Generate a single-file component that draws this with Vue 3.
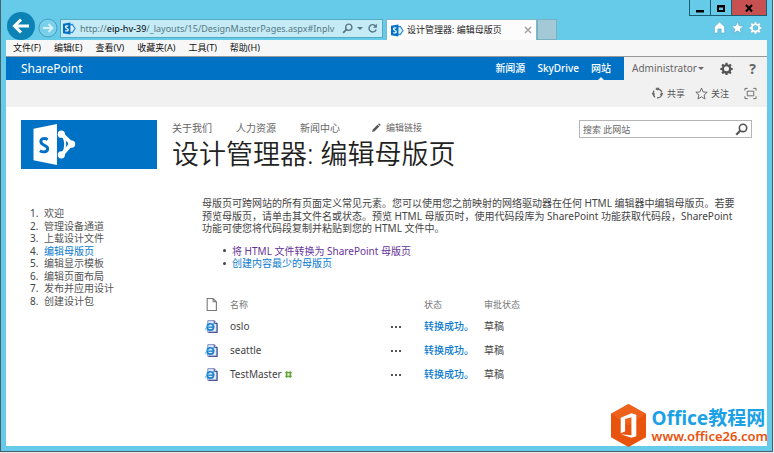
<script setup>
const menus = ['文件(F)', '编辑(E)', '查看(V)', '收藏夹(A)', '工具(T)', '帮助(H)']
const suiteLinks = ['新闻源', 'SkyDrive', '网站']
const siteLinks = ['关于我们', '人力资源', '新闻中心']
const steps = ['欢迎', '管理设备通道', '上载设计文件', '编辑母版页', '编辑显示模板', '编辑页面布局', '发布并应用设计', '创建设计包']
const current = 3
const pages = [
  { name: 'oslo', fresh: false },
  { name: 'seattle', fresh: false },
  { name: 'TestMaster', fresh: true },
]
</script>

<template>
  <div class="window">
    <svg class="defs" width="0" height="0" aria-hidden="true">
      <symbol id="gear" viewBox="0 0 16 16">
        <path fill-rule="evenodd" d="M6.8 1h2.4l.4 2 1.2.5 1.8-1.2 1.7 1.7-1.2 1.8.5 1.2 2 .4v2.4l-2 .4-.5 1.2 1.2 1.8-1.7 1.7-1.8-1.2-1.2.5-.4 2H6.8l-.4-2-1.2-.5-1.8 1.2-1.7-1.7 1.2-1.8-.5-1.2-2-.4V7.4l2-.4.5-1.200L1.700 4l1.700-1.700 1.800 1.200L6.400 3zM8 5.200a3.100 3.100 0 1 0 0 6.200 3.100 3.100 0 0 0 0-6.200z" />
      </symbol>
      <symbol id="lens" viewBox="0 0 12 12">
        <circle cx="7.400" cy="4.600" r="3.400" fill="none" stroke="currentColor" stroke-width="1.500" />
        <path d="M5 7 1.200 10.800" stroke="currentColor" stroke-width="2" />
      </symbol>
      <symbol id="sp" viewBox="0 0 14 14">
        <path d="M7.500 3 10 2.600 13 7l-3 4.400-2.500-.4" fill="#d6effa" stroke="#2a87cf" stroke-width="1.200" />
        <path d="M0 2 8 .5v13L0 12z" fill="#0072c6" />
        <path d="M5.700 4.500C4.500 3.900 2.700 4 2.700 5.500c0 1.600 3 1.300 3 2.900 0 1.400-1.900 1.600-3.200.9" fill="none" stroke="#fff" stroke-width="1.300" />
      </symbol>
    </svg>

    <header class="titlebar">
      <button class="back" aria-label="后退">
        <svg viewBox="0 0 28 28"><path d="M22 14H8M14 7.500 7.500 14l6.500 6.500" fill="none" stroke="#fff" stroke-width="3" /></svg>
      </button>
      <button class="forward" aria-label="前进">
        <svg viewBox="0 0 20 20"><circle cx="10" cy="10" r="9" fill="#79d0ea" stroke="#4a9fbe" /><path d="M5 10h9M10.500 6l4 4-4 4" fill="none" stroke="#d5f2fa" stroke-width="1.800" /></svg>
      </button>
      <div class="address">
        <svg class="i13"><use href="#sp" /></svg>
        <span class="url">http://<b>eip-hv-39</b>/_layouts/15/DesignMasterPages.aspx#Inplv</span>
        <button aria-label="搜索"><svg class="i11"><use href="#lens" /></svg></button>
        <i class="caret"></i>
        <button aria-label="刷新"><svg class="i11" viewBox="0 0 12 12"><path d="M9.500 3.500A4 4 0 1 0 10 7" fill="none" stroke="currentColor" stroke-width="1.500" /><path d="M10.800.8v4.400H6.400z" fill="currentColor" /></svg></button>
      </div>
      <div class="tab">
        <svg class="i13"><use href="#sp" /></svg>
        <span>设计管理器: 编辑母版页</span>
        <button aria-label="关闭选项卡"><svg viewBox="0 0 8 8"><path d="m1 1 6 6M7 1 1 7" stroke="#a3a3a3" stroke-width="1.500" /></svg></button>
      </div>
      <button class="newtab" aria-label="新建选项卡"></button>
      <div class="corner">
        <div class="controls">
          <button aria-label="最小化"><svg viewBox="0 0 12 12"><path d="M2 8h8v2.500H2z" /></svg></button>
          <button aria-label="最大化"><svg viewBox="0 0 12 12"><path fill-rule="evenodd" d="M2 3h8v7H2zm2 2.500v2.500h4V5.500z" /></svg></button>
          <button class="close" aria-label="关闭"><svg viewBox="0 0 12 12"><path d="m3 3 6 6.500M9 3 3 9.500" stroke="#000" stroke-width="2" /></svg></button>
        </div>
        <div class="tools">
          <button aria-label="主页"><svg viewBox="0 0 14 14"><path d="M7 1 1.500 6.200V13h3.700V8.500h3.600V13h3.700V6.200z" fill="#fff" stroke="#55a5bd" stroke-width=".6" /></svg></button>
          <button aria-label="收藏夹"><svg viewBox="0 0 14 14"><path d="m7 .8 1.800 4.300 4.700.4-3.600 3 1.100 4.600L7 10.600l-4 2.500 1.100-4.600-3.600-3 4.700-.4z" fill="#fff" stroke="#55a5bd" stroke-width=".6" /></svg></button>
          <button aria-label="工具"><svg fill="#fff" stroke="#55a5bd" stroke-width=".5"><use href="#gear" /></svg></button>
        </div>
      </div>
    </header>

    <div class="page">
      <nav class="menubar">
        <button v-for="m in menus" :key="m">{{ m }}</button>
      </nav>

      <div class="suite">
        <a class="brand" href="#">SharePoint</a>
        <nav class="suite-links">
          <a v-for="(l, i) in suiteLinks" :key="l" href="#" :class="{ active: i === 2 }">{{ l }}</a>
        </nav>
        <div class="user">
          <button class="account">Administrator<i class="caret"></i></button>
          <button aria-label="设置"><svg class="i13" fill="#555"><use href="#gear" /></svg></button>
          <button class="help" aria-label="帮助">?</button>
        </div>
      </div>

      <div class="ribbon">
        <button>
          <svg viewBox="0 0 14 14"><circle cx="7" cy="7" r="4.800" fill="none" stroke="#666" stroke-width="1.400" stroke-dasharray="8 2" /><path d="M5 .8h4L7.500 4zM.5 7l3-1 .8 3.500zM13.500 7l-3-1-.8 3.500z" fill="#666" /></svg>
          共享
        </button>
        <button>
          <svg viewBox="0 0 14 14"><path d="m7 1.200 1.700 4.100 4.400.4-3.300 2.900 1 4.300L7 10.600l-3.800 2.300 1-4.300L.9 5.700l4.400-.4z" fill="none" stroke="#666" /></svg>
          关注
        </button>
        <button class="focus" aria-label="焦点内容">
          <svg viewBox="0 0 14 14"><path d="M1 4V1.500h3M10 1.500h3V4M13 10v2.500h-3M4 12.500H1V10M3.500 4.500h7v5h-7z" fill="none" stroke="#666" /></svg>
        </button>
      </div>

      <div class="masthead">
        <a class="logo" href="#" aria-label="SharePoint">
          <svg viewBox="0 0 48 44">
            <path d="M2 6 26 1v42L2 38z" fill="#fff" />
            <path d="M16.500 17C13.500 15 9.500 15.800 9.500 19c0 4.500 7 3.300 7 7.300 0 3.600-5 4-8 2" fill="none" stroke="#0072c6" stroke-width="3" />
            <path d="M31 11.500 41 21 31 32.500" fill="none" stroke="#fff" stroke-width="4" />
            <path d="M32 13Q37 21.500 32 31" fill="none" stroke="#fff" stroke-width="2" />
            <circle cx="30.500" cy="11.500" r="3.700" fill="#fff" /><circle cx="41" cy="21.500" r="3.700" fill="#fff" /><circle cx="30.500" cy="32.500" r="3.700" fill="#fff" />
          </svg>
        </a>
        <div class="heading">
          <nav class="site-links">
            <a v-for="l in siteLinks" :key="l" href="#">{{ l }}</a>
            <a class="edit" href="#"><svg viewBox="0 0 10 10"><path d="m1 9 .8-2.600L6.500 1.700l1.800 1.800-4.700 4.700zM7 1.200 8 .3 9.700 2l-.9 1z" fill="#555" /></svg>编辑链接</a>
          </nav>
          <h1>设计管理器: 编辑母版页</h1>
        </div>
        <form class="search" @submit.prevent>
          <input type="text" placeholder="搜索 此网站" aria-label="搜索 此网站" />
          <button aria-label="搜索"><svg class="i13"><use href="#lens" /></svg></button>
        </form>
      </div>

      <div class="body">
        <ol class="steps">
          <li v-for="(s, i) in steps" :key="s"><span>{{ i + 1 }}.</span><a href="#" :class="{ current: i === current }">{{ s }}</a></li>
        </ol>
        <main>
          <p>母版页可跨网站的所有页面定义常见元素。您可以使用您之前映射的网络驱动器在任何 HTML 编辑器中编辑母版页。若要<br />预览母版页，请单击其文件名或状态。预览 HTML 母版页时，使用代码段库为 SharePoint 功能获取代码段，SharePoint<br />功能可使您将代码段复制并粘贴到您的 HTML 文件中。</p>
          <ul>
            <li><a class="visited" href="#">将 HTML 文件转换为 SharePoint 母版页</a></li>
            <li><a href="#">创建内容最少的母版页</a></li>
          </ul>
          <table>
            <thead>
              <tr>
                <th class="c-icon"><svg viewBox="0 0 10 12"><path d="M1 .5h5.500L9.500 3.500v8H1zM6.500.5v3h3" fill="none" stroke="#777" /></svg></th>
                <th class="c-name">名称</th>
                <th class="c-more"></th>
                <th class="c-state">状态</th>
                <th>审批状态</th>
              </tr>
            </thead>
            <tbody>
              <tr v-for="p in pages" :key="p.name">
                <td class="c-icon">
                  <svg viewBox="0 0 14 14"><path d="M3 .7h7l3 3v9.600H3z" fill="#e4e9f8" stroke="#7485c4" /><path d="M10 .7v3h3v9.600H4" fill="none" stroke="#4a5697" stroke-width="1.200" /><circle cx="5.800" cy="7.500" r="3.400" fill="#e4f4ff" stroke="#1d7fd0" stroke-width="1.900" /><path d="M3.500 7.700h6" stroke="#1d7fd0" stroke-width="1.500" /><path d="M.8 11.200C-.5 8 7 2.500 10.500 4" fill="none" stroke="#56aee8" /></svg>
                </td>
                <td class="c-name">{{ p.name }}<svg v-if="p.fresh" class="new" viewBox="0 0 8 8"><path d="M2 0v8M6 0v8M0 2h8M0 6h8" stroke="#58992e" fill="none" /><path d="M1.500 1.500h5v5h-5z" fill="#8cc860" stroke="#58992e" /><path d="M3 3h2v2H3z" fill="#fff" /></svg></td>
                <td class="c-more"><button aria-label="打开菜单"><svg viewBox="0 0 12 4"><path d="M1 1h2v2H1zM5 1h2v2H5zM9 1h2v2H9z" fill="#555" /></svg></button></td>
                <td class="c-state"><a href="#">转换成功。</a></td>
                <td>草稿</td>
              </tr>
            </tbody>
          </table>
        </main>
      </div>
    </div>

    <div class="watermark">
      <svg viewBox="0 0 36 44">
        <path d="M18 0 36 10v24L18 44 0 34V10z" fill="#e8530e" />
        <path d="M18 0 36 10 18 22 0 10z" fill="#f06a25" opacity=".6" />
        <path fill-rule="evenodd" d="m10 14 11-4.500 5 1.500v22l-5 1.500L10 31l11 1V13.500l-6.500 1.700v13L10 30z" fill="#fff" />
      </svg>
      <div><strong>Office教程网</strong><span>www.office26.com</span></div>
    </div>
  </div>
</template>

<style>
body {
  margin: 0;
  background: #e9eaf0;
}
</style>

<style scoped>
.window {
  position: relative;
  box-sizing: border-box;
  min-height: calc(100vh - 1px);
  margin: 0 1px 1px 0;
  display: flex;
  flex-direction: column;
  padding: 0 5px 5px;
  background: #66cae9;
  border: solid #46606e;
  border-width: 0 1px 1px;
  font: 10px/1.25 "Noto Sans", "Noto Sans CJK SC", sans-serif;
  color: #444;
}
.defs {
  position: absolute;
}
button {
  display: flex;
  align-items: center;
  padding: 0;
  border: 0;
  background: none;
  font: inherit;
  color: inherit;
}
a {
  color: #0072c6;
  text-decoration: none;
}
svg {
  display: block;
  flex: none;
}
.i11 {
  width: 11px;
  height: 11px;
}
.i13 {
  width: 13px;
  height: 13px;
}
.caret {
  border: 3px solid transparent;
  border-top-color: currentColor;
  border-bottom: 0;
}

.titlebar {
  height: 40px;
  display: flex;
  align-items: flex-end;
}
.back {
  width: 28px;
  height: 28px;
  margin-left: 1px;
  border-radius: 50%;
  background: #0c82b5;
}
.back svg {
  width: 28px;
}
.forward {
  margin: 0 2px 2px 3px;
}
.forward svg {
  width: 20px;
}
.address {
  box-sizing: border-box;
  flex: 0 0 323px;
  min-width: 0;
  height: 19px;
  margin-bottom: 2px;
  padding: 0 4px 0 2px;
  display: flex;
  align-items: center;
  gap: 4px;
  border: 1px solid #54a9c4;
  background: #c4ebf6;
  font-size: 9px;
  color: #567985;
}
.url {
  flex: 1;
  overflow: hidden;
  white-space: nowrap;
}
.url b {
  font-weight: 500;
  color: #16272e;
}
.tab {
  box-sizing: border-box;
  flex: 0 0 151px;
  height: 21px;
  margin-left: 3px;
  padding: 0 4px;
  display: flex;
  align-items: center;
  gap: 3px;
  background: #fcfcfc;
  border: 1px solid #78b8cc;
  border-bottom: 0;
  font-size: 9px;
  color: #222;
}
.tab span {
  flex: 1;
  white-space: nowrap;
}
.tab button svg {
  width: 8px;
}
.newtab {
  width: 20px;
  height: 21px;
  border: 1px solid #79b0c2;
  background: #a3c9d6;
}
.corner {
  margin-left: auto;
  height: 40px;
}
.controls {
  display: flex;
  border: solid #1c5d73;
  border-width: 0 1px 1px;
}
.controls button {
  width: 21px;
  height: 15px;
  justify-content: center;
  border-right: 1px solid #1c5d73;
}
.controls .close {
  width: 34px;
  border: 0;
  background: #c75050;
}
.controls svg {
  width: 12px;
}
.tools {
  display: flex;
  justify-content: flex-end;
  gap: 5px;
  padding: 5px 5px 0 0;
}
.tools svg {
  width: 13px;
  height: 13px;
}

.page {
  flex: 1;
  display: flex;
  flex-direction: column;
  background: #fff;
}
.menubar {
  height: 16px;
  padding-left: 7px;
  display: flex;
  gap: 13px;
  background: #f7f7f7;
  border-bottom: 1px solid #999;
  font-size: 9px;
  color: #111;
}
.suite {
  height: 23px;
  display: flex;
  background: #0072c6;
}
.suite a {
  color: #fff;
}
.suite .brand {
  flex: 1;
  padding-left: 15px;
  font-size: 12px;
  line-height: 23px;
}
.suite-links {
  display: flex;
  gap: 12px;
  padding-right: 13px;
  font-weight: 500;
  line-height: 23px;
}
.suite-links .active {
  position: relative;
}
.suite-links .active::after {
  content: "";
  position: absolute;
  left: 50%;
  bottom: 0;
  margin-left: -3px;
  border: 3px solid transparent;
  border-bottom-color: #f1f1f1;
  border-top: 0;
}
.user {
  flex: 0 0 143px;
  box-sizing: border-box;
  padding: 0 11px 0 8px;
  display: flex;
  justify-content: space-between;
  background: #f1f1f1;
  color: #666;
}
.account {
  gap: 1px;
}
.help {
  font-size: 14px;
  font-weight: 700;
}
.ribbon {
  height: 27px;
  padding-right: 10px;
  display: flex;
  justify-content: flex-end;
  align-items: center;
  gap: 10px;
  background: #f1f1f1;
  font-size: 9px;
  color: #555;
}
.ribbon button {
  gap: 3px;
}
.ribbon .focus {
  margin-left: 5px;
}
.ribbon svg {
  width: 13px;
}

.masthead {
  padding: 13px 15px 0;
  display: flex;
  align-items: flex-start;
}
.logo {
  box-sizing: border-box;
  flex: 0 0 136px;
  height: 49px;
  padding: 3px 10px;
  background: #0072c6;
}
.logo svg {
  width: 48px;
  height: 43px;
}
.heading {
  flex: 1;
  margin-left: 15px;
}
.site-links {
  display: flex;
  gap: 24px;
  line-height: 16px;
}
.site-links a {
  color: #666;
}
.site-links .edit {
  display: flex;
  align-items: center;
  gap: 5px;
  margin-left: 7px;
  font-size: 9px;
}
.edit svg {
  width: 10px;
}
h1 {
  margin: 0;
  font-size: 27px;
  font-weight: 350;
  line-height: 36px;
  color: #222;
  white-space: nowrap;
}
.search {
  box-sizing: border-box;
  flex: 0 0 173px;
  height: 18px;
  padding: 0 3px;
  display: flex;
  border: 1px solid #b5b5b5;
  color: #555;
}
.search input {
  flex: 1;
  min-width: 0;
  padding: 0;
  border: 0;
  outline: 0;
  font: 9px "Noto Sans", "Noto Sans CJK SC", sans-serif;
}
.search input::placeholder {
  color: #666;
}

.body {
  padding: 25px 15px 0;
  display: flex;
}
.steps {
  flex: 0 0 181px;
  box-sizing: border-box;
  margin: 0;
  padding: 10px 0 0 9px;
  list-style: none;
}
.steps li {
  display: flex;
}
.steps span {
  width: 14px;
}
.steps a {
  color: #555;
}
.steps .current {
  color: #0a7ad0;
}
main {
  flex: 1;
}
p {
  margin: 0;
  white-space: nowrap;
}
ul {
  margin: 10px 0 0;
  padding-left: 21px;
  list-style: none;
}
li {
  display: flex;
  align-items: center;
}
ul li::before {
  content: "";
  width: 3px;
  height: 3px;
  margin-right: 6px;
  border-radius: 50%;
  background: #444;
}
ul a {
  color: #0a7ad0;
}
ul .visited {
  color: #663399;
}
table {
  margin-top: 25px;
  border-collapse: collapse;
  table-layout: fixed;
}
th,
td {
  height: 24px;
  padding: 0;
  text-align: left;
  vertical-align: middle;
}
th {
  height: 20px;
  font-size: 9px;
  font-weight: 400;
  color: #777;
}
.c-icon {
  width: 28px;
}
.c-icon svg {
  width: 13px;
  height: 13px;
  margin-left: 3px;
}
.c-name {
  width: 160px;
}
.c-name .new {
  display: inline-block;
  width: 7px;
  height: 7px;
  margin-left: 3px;
}
.c-more {
  width: 34px;
}
.c-more svg {
  width: 12px;
}
.c-state {
  width: 60px;
}
.c-state a {
  font-weight: 500;
  color: #0a7ad0;
}

.watermark {
  position: absolute;
  right: 4px;
  bottom: 4px;
  display: flex;
  align-items: center;
  gap: 6px;
}
.watermark svg {
  width: 35px;
  height: 43px;
}
.watermark div {
  display: flex;
  flex-direction: column;
}
.watermark strong {
  font-size: 19px;
  line-height: 20px;
  color: #1ba1e6;
}
.watermark span {
  font-size: 13px;
  font-weight: 600;
  line-height: 16px;
  color: #e8530e;
}
</style>
